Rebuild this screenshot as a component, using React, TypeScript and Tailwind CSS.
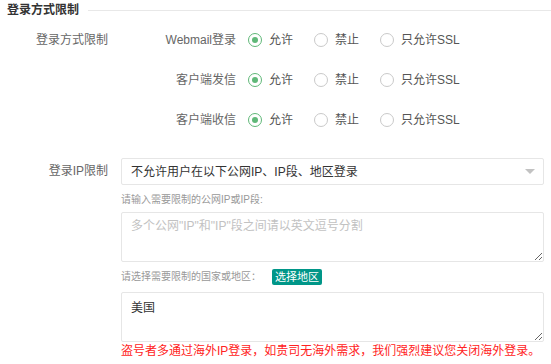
import React from "react";

const FONT = "font-['Liberation_Sans','Noto_Sans_CJK_SC',sans-serif]";

const Radio = ({ checked, label }: { checked?: boolean; label: string }) => (
  <div className="flex items-center mr-[21px]">
    {checked ? (
      <div className="w-[14px] h-[14px] rounded-full border-[1.5px] border-[#5fb878] flex items-center justify-center">
        <div className="w-[6px] h-[6px] rounded-full bg-[#5fb878]" />
      </div>
    ) : (
      <div className="w-[14px] h-[14px] rounded-full border border-[#c9c9c9]" />
    )}
    <span className="ml-[7px] text-[12px] text-[#555]">{label}</span>
  </div>
);

const rows = [
  { label: "登录方式限制", sub: "Webmail登录" },
  { label: "", sub: "客户端发信" },
  { label: "", sub: "客户端收信" },
];

export default function App() {
  return (
    <div className={`w-[551px] h-[364px] bg-white overflow-hidden ${FONT}`}>
      {/* section title */}
      <div className="flex items-center h-[20px] pl-[7px]">
        <span className="text-[12px] font-bold text-[#333] leading-[20px]">登录方式限制</span>
        <div className="flex-1 h-px bg-[#e8e8e8] ml-[9px]" />
      </div>

      {/* login method rows */}
      {rows.map((r) => (
        <div key={r.sub} className="flex items-center h-[40px] text-[12px] leading-[16px]">
          <div className="w-[108px] text-right text-[#666]">{r.label}</div>
          <div className="w-[128px] text-right text-[#666]">{r.sub}</div>
          <div className="flex items-center ml-[12px]">
            <Radio checked label="允许" />
            <Radio label="禁止" />
            <Radio label="只允许SSL" />
          </div>
        </div>
      ))}

      {/* IP restriction */}
      <div className="flex mt-[18px]">
        <div className="w-[108px] text-right text-[12px] text-[#666] leading-[27px]">登录IP限制</div>
        <div className="ml-[13px] w-[423px]">
          <div className="h-[27px] border border-[#e6e6e6] rounded-[2px] flex items-center justify-between pl-[9px] pr-[8px]">
            <span className="text-[12px] text-[#333] leading-[16px]">不允许用户在以下公网IP、IP段、地区登录</span>
            <div className="w-0 h-0 border-l-[5px] border-r-[5px] border-t-[5px] border-l-transparent border-r-transparent border-t-[#c2c2c2]" />
          </div>
          <div className="mt-[8px] h-[14px] leading-[14px] text-[10px] text-[#999]">请输入需要限制的公网IP或IP段:</div>
          <textarea
            readOnly
            placeholder={'多个公网"IP"和"IP"段之间请以英文逗号分割'}
            className="mt-[5px] block w-full h-[50px] border border-[#e6e6e6] rounded-[2px] pt-[4px] px-[9px] text-[12px] leading-[18px] text-[#333] placeholder:text-[#c2c2c2] outline-none"
          />
          <div className="mt-[6px] h-[17px] flex items-center">
            <span className="text-[10px] text-[#999] leading-[14px]">请选择需要限制的国家或地区：</span>
            <span className="ml-[11px] h-[16px] px-[3px] bg-[#009688] rounded-[2px] text-white text-[11px] leading-[16px]">选择地区</span>
          </div>
          <textarea
            readOnly
            defaultValue="美国"
            className="mt-[7px] block w-full h-[50px] border border-[#e6e6e6] rounded-[2px] pt-[6px] px-[9px] text-[12px] leading-[18px] text-[#333] outline-none"
          />
          <div className="mt-[1px] h-[16px] leading-[16px] text-[12px] text-[#ff2222] whitespace-nowrap">
            盗号者多通过海外IP登录，如贵司无海外需求，我们强烈建议您关闭海外登录。
          </div>
        </div>
      </div>
    </div>
  );
}
